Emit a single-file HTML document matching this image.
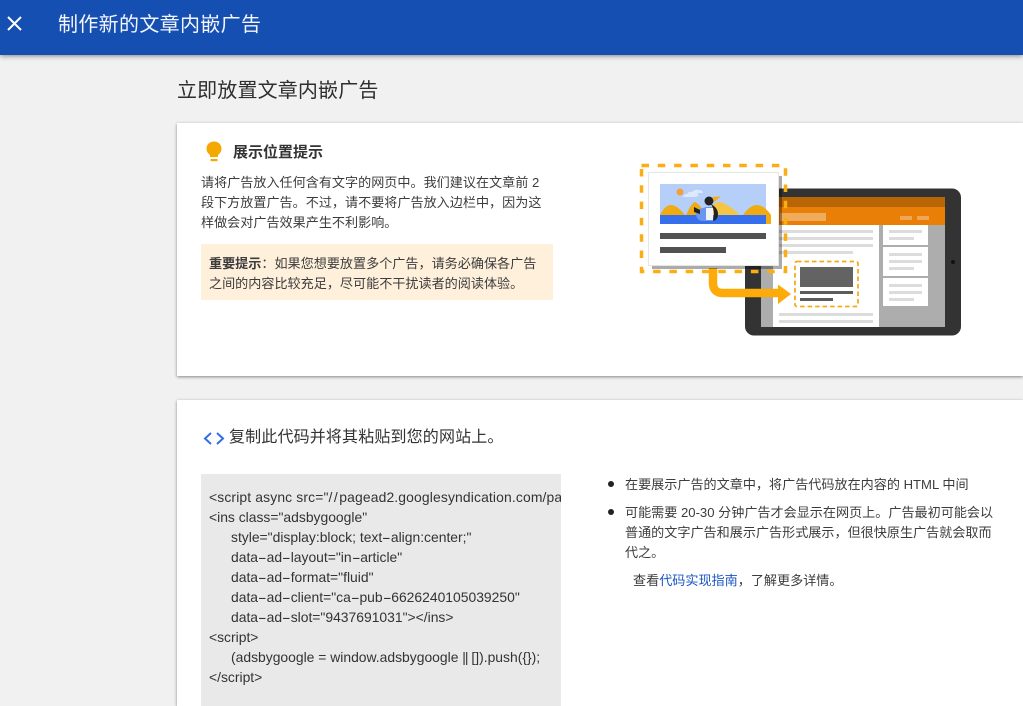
<!DOCTYPE html>
<html lang="zh">
<head>
<meta charset="utf-8">
<title>制作新的文章内嵌广告</title>
<style>
*{box-sizing:border-box}
html,body{margin:0;padding:0;width:1023px;height:706px;overflow:hidden;background:#f1f1f1;font-family:"Liberation Sans","Noto Sans CJK SC",sans-serif;color:#333}
.abs{position:absolute;white-space:nowrap}
#bar{position:absolute;left:0;top:0;width:1023px;height:55px;background:#164fb2;box-shadow:0 1px 5px rgba(0,0,0,.45);z-index:3}
#bar .t{left:58px;top:11px;font-size:20px;line-height:28px;color:#f3f6fb;letter-spacing:.33px}
.card{position:absolute;left:177px;width:846px;background:#fff;box-shadow:0 1px 3px rgba(0,0,0,.45)}
.body{font-size:13.1px;line-height:20px;color:#3c3c3c}
#code{position:absolute;left:201px;top:474px;width:360px;height:232px;background:#e9e9e9;overflow:hidden}
#code div{position:absolute;left:8px;white-space:pre;font-size:13.9px;line-height:20px;color:#333}
#code u{display:inline-block;width:8.600px;text-align:center;text-decoration:none;transform:scaleX(1.900)}
#code s{text-decoration:none;letter-spacing:1.500px}
.dot{position:absolute;left:608px;width:6px;height:6px;border-radius:50%;background:#222}
</style>
</head>
<body>
<div id="bar">
  <svg class="abs" style="left:6px;top:15px" width="17" height="17" viewBox="0 0 17 17"><path d="M2 2L15 15M15 2L2 15" stroke="#fff" stroke-width="2" fill="none"/></svg>
  <div class="abs t">制作新的文章内嵌广告</div>
</div>
<div class="abs" style="left:177px;top:77px;font-size:20px;line-height:28px;color:#2e2e2e;letter-spacing:.15px">立即放置文章内嵌广告</div>

<div class="card" style="top:123px;height:253px"></div>
<div class="card" style="top:400px;height:306px"></div>

<svg class="abs" style="left:204.500px;top:141px" width="18" height="22" viewBox="0 0 18 22"><path d="M9 0.500C4.800 0.500 1.500 3.600 1.500 7.600C1.500 10.400 3 12.500 5 14V16H13V14C15 12.500 16.500 10.400 16.500 7.600C16.500 3.600 13.200 0.500 9 0.500Z" fill="#f5a800"/><rect x="5.500" y="18" width="7" height="2.200" fill="#f5a800"/></svg>
<div class="abs" style="left:233px;top:143px;font-size:15px;line-height:20px;font-weight:700;color:#333">展示位置提示</div>

<div class="abs body" style="left:201px;top:173px">请将广告放入任何含有文字的网页中。我们建议在文章前 2<br>段下方放置广告。不过，请不要将广告放入边栏中，因为这<br>样做会对广告效果产生不利影响。</div>

<div class="abs" style="left:201px;top:244px;width:352px;height:56px;background:#fff0dc"></div>
<div class="abs body" style="left:209px;top:254px"><b>重要提示</b>：如果您想要放置多个广告，请务必确保各广告<br>之间的内容比较充足，尽可能不干扰读者的阅读体验。</div>

<svg class="abs" style="left:630px;top:150px" width="340" height="195" viewBox="630 150 340 195">
  <rect x="745" y="188.500" width="216" height="147" rx="9" fill="#333"/>
  <rect x="761" y="197" width="184" height="130" fill="#adadad"/>
  <rect x="761" y="197" width="184" height="10" fill="#b76505"/>
  <rect x="761" y="207" width="184" height="18" fill="#e97f07"/>
  <rect x="780" y="213" width="46" height="8" fill="#efac5d"/>
  <rect x="900" y="216" width="12" height="4" fill="#f0a656"/>
  <rect x="917" y="216" width="12" height="4" fill="#f0a656"/>
  <rect x="773" y="225" width="106" height="102" fill="#fff"/>
  <g fill="#dcdcdc">
    <rect x="779" y="230" width="94" height="3"/><rect x="779" y="237" width="94" height="3"/><rect x="779" y="244" width="94" height="3"/><rect x="779" y="251" width="74" height="3"/>
    <rect x="779" y="313" width="94" height="3"/><rect x="779" y="320" width="94" height="3"/>
  </g>
  <rect x="883" y="225" width="45" height="20" fill="#fff"/>
  <rect x="883" y="247" width="45" height="29" fill="#fff"/>
  <rect x="883" y="278" width="45" height="28" fill="#fff"/>
  <g fill="#dcdcdc">
    <rect x="889" y="230" width="33" height="3"/><rect x="889" y="237" width="25" height="3"/>
    <rect x="889" y="253" width="33" height="3"/><rect x="889" y="260" width="33" height="3"/><rect x="889" y="267" width="25" height="3"/>
    <rect x="889" y="284" width="33" height="3"/><rect x="889" y="291" width="33" height="3"/><rect x="889" y="298" width="25" height="3"/>
  </g>
  <circle cx="953" cy="262" r="2" fill="#111"/>
  <rect x="795" y="261.500" width="63" height="45" rx="2" fill="#fff" stroke="#f5ab18" stroke-width="1.800" stroke-dasharray="4.500 3"/>
  <rect x="800" y="267" width="53" height="20" fill="#636363"/>
  <rect x="800" y="291" width="53" height="3" fill="#5c5c5c"/>
  <rect x="800" y="298" width="33" height="3" fill="#5c5c5c"/>
  <path d="M713 268V283Q713 293 723 293H780" fill="none" stroke="#fcab0a" stroke-width="8.500"/>
  <path d="M778 284.500L791 294L778 304Z" fill="#fcab0a"/>
  <rect x="652" y="176" width="130" height="93" fill="#000" opacity=".33"/>
  <rect x="641.500" y="165.500" width="144" height="106" fill="none" stroke="#fdad14" stroke-width="3.500" stroke-dasharray="7.500 8.800"/>
  <rect x="648.500" y="172.500" width="130" height="93" fill="#fff" stroke="#e6e6e6"/>
  <rect x="660" y="184" width="106" height="40" fill="#b5cff8"/>
  <circle cx="680" cy="192" r="3.500" fill="#f29f38"/>
  <path d="M683 197q0-3 4-3q2-3 5-2q3-3 7-2q4 0 4 3h-5q1 4-3 4z" fill="#dce8fb"/>
  <path d="M660 215Q665 205 671 205Q677 205 685 215z" fill="#f1ab12"/>
  <path d="M686 215Q692 202 695 202Q700 204 706 215z" fill="#f1ab12"/>
  <path d="M706 215Q712 202 720 202Q728 204 740 215z" fill="#f6c544"/>
  <path d="M743 215Q750 205 757 205Q764 205 771 215V224H766V215z" fill="#f1ab12"/>
  <rect x="660" y="215" width="106" height="9" fill="#356fee"/>
  <path d="M696 210l10-3h7v14h-11q-7-1-6-11z" fill="#6a97ee"/>
  <rect x="706" y="208" width="7" height="12" fill="#f2f3f7"/>
  <path d="M711 204q7 4 7 10q0 5-4 7l-1-1q2-6 0-12z" fill="#222"/>
  <circle cx="709" cy="201" r="4.500" fill="#222"/>
  <path d="M712 197l9-.5l-7 5.500z" fill="#f5ab20"/>
  <path d="M694 207l6 3v4l-6-2z" fill="#222"/>
  <rect x="660" y="233" width="106" height="6" fill="#525252"/>
  <rect x="660" y="247" width="66" height="6" fill="#525252"/>
</svg>

<svg class="abs" style="left:203px;top:431px" width="22" height="15" viewBox="0 0 22 15"><path d="M8 2L2 7.500L8 13M14 2L20 7.500L14 13" fill="none" stroke="#2f6ee5" stroke-width="2"/></svg>
<div class="abs" style="left:229px;top:427px;font-size:16px;line-height:22px;letter-spacing:.15px;color:#333">复制此代码并将其粘贴到您的网站上。</div>

<div id="code">
  <div style="top:13px;letter-spacing:.14px">&lt;script async src="<s>//</s>pagead2.googlesyndication.com/pagead/js/adsbygoogle.js"&gt;&lt;/script&gt;</div>
  <div style="top:33px">&lt;ins class="adsbygoogle"</div>
  <div style="top:53px;left:30px">style="display:block; text<u>-</u>align:center;"</div>
  <div style="top:73px;left:30px">data<u>-</u>ad<u>-</u>layout="in<u>-</u>article"</div>
  <div style="top:93px;left:30px">data<u>-</u>ad<u>-</u>format="fluid"</div>
  <div style="top:113px;left:30px">data<u>-</u>ad<u>-</u>client="ca<u>-</u>pub<u>-</u>6626240105039250"</div>
  <div style="top:133px;left:30px">data<u>-</u>ad<u>-</u>slot="9437691031"&gt;&lt;/ins&gt;</div>
  <div style="top:153px">&lt;script&gt;</div>
  <div style="top:173px;left:30px">(adsbygoogle = window.adsbygoogle <span style="letter-spacing:-1px">||</span> []).push({});</div>
  <div style="top:193px">&lt;/script&gt;</div>
</div>

<div class="dot" style="top:481px"></div>
<div class="abs body" style="left:625px;top:475px">在要展示广告的文章中，将广告代码放在内容的 HTML 中间</div>
<div class="dot" style="top:509px"></div>
<div class="abs body" style="left:625px;top:503px">可能需要 20-30 分钟广告才会显示在网页上。广告最初可能会以<br>普通的文字广告和展示广告形式展示，但很快原生广告就会取而<br>代之。</div>
<div class="abs body" style="left:633px;top:571px">查看<span style="color:#1a56c4">代码实现指南</span>，了解更多详情。</div>
</body>
</html>
